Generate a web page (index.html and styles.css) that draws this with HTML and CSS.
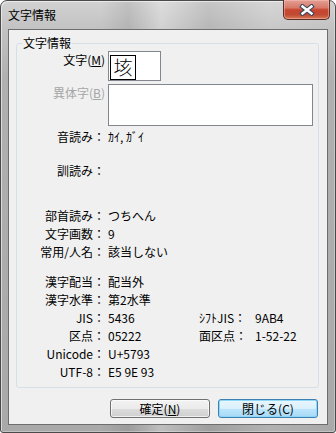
FILE: index.html
```html
<!DOCTYPE html>
<html lang="ja">
<head>
  <meta charset="UTF-8">
  <title>文字情報</title>
  <link rel="stylesheet" href="styles.css">
</head>
<body>
  <div class="window">
    <!-- Title bar -->
    <div class="titlebar">
      <span class="title">文字情報</span>
      <button class="close" aria-label="閉じる">
        <svg width="16" height="12" viewBox="0 0 16 12">
          <path d="M3.5 2.5 L12.5 9.5 M12.5 2.5 L3.5 9.5" stroke="#3b4660" stroke-width="4.6" stroke-linecap="square"/>
          <path d="M3.5 2.5 L12.5 9.5 M12.5 2.5 L3.5 9.5" stroke="#fff" stroke-width="2.4" stroke-linecap="square"/>
        </svg>
      </button>
    </div>

    <!-- Client area -->
    <div class="client">
      <fieldset class="group">
        <legend>文字情報</legend>
        <div class="info">
          <div class="label">文字(<u>M</u>)</div>
          <div class="value wide">
            <div class="charbox"><span class="glyph">垓</span></div>
          </div>

          <div class="label disabled">異体字(<u>B</u>)</div>
          <div class="value wide"><div class="variants"></div></div>

          <div class="label">音読み：</div>
          <div class="value wide">ｶｲ, ｶﾞｲ</div>

          <div class="label">訓読み：</div>
          <div class="value wide"></div>

          <div class="label">部首読み：</div>
          <div class="value wide">つちへん</div>

          <div class="label">文字画数：</div>
          <div class="value wide">9</div>

          <div class="label">常用/人名：</div>
          <div class="value wide">該当しない</div>

          <div class="label">漢字配当：</div>
          <div class="value wide">配当外</div>

          <div class="label">漢字水準：</div>
          <div class="value wide">第2水準</div>

          <div class="label">JIS：</div>
          <div class="value">5436</div>
          <div class="label2">ｼﾌﾄJIS：</div>
          <div class="value">9AB4</div>

          <div class="label">区点：</div>
          <div class="value">05222</div>
          <div class="label2">面区点：</div>
          <div class="value">1-52-22</div>

          <div class="label">Unicode：</div>
          <div class="value wide">U+5793</div>

          <div class="label">UTF-8：</div>
          <div class="value wide">E5 9E 93</div>
        </div>
      </fieldset>

      <div class="buttons">
        <button class="btn">確定(<u>N</u>)</button>
        <button class="btn default">閉じる(C)</button>
      </div>
    </div>
  </div>
</body>
</html>
```

FILE: styles.css
```css
body {
  margin: 0;
  font-family: "Noto Sans CJK JP", "Noto Sans", sans-serif;
  font-size: 12px;
  color: #000;
}

/* Window frame */
.window {
  width: 336px;
  height: 433px;
  box-sizing: border-box;
  border: 1px solid #4a4a4a;
  border-radius: 7px 7px 3px 3px;
  padding: 0 7px 7px;
  display: flex;
  flex-direction: column;
  box-shadow: inset 1px 1px 0 rgba(255, 255, 255, 0.55), inset -1px -1px 0 rgba(255, 255, 255, 0.3);
  background:
    linear-gradient(90deg, rgba(255,255,255,0) 0, rgba(255,255,255,0) 30%, rgba(0,0,0,0.08) 38%, rgba(255,255,255,0.25) 48%, rgba(0,0,0,0.06) 62%, rgba(255,255,255,0.1) 80%, rgba(255,255,255,0) 100%),
    linear-gradient(#d2d2d2 0, #c2c2c2 28px, #b0b0b0 80px, #a9a9a9 100%);
}

.titlebar {
  height: 28px;
  display: flex;
  align-items: flex-start;
}

.title {
  margin-top: 5px;
  line-height: 18px;
}

.close {
  margin: -1px -2px 0 auto;
  width: 47px;
  height: 20px;
  padding: 0;
  border: 1px solid #5b2d27;
  border-top: none;
  border-radius: 0 0 5px 5px;
  display: flex;
  align-items: center;
  justify-content: center;
  box-shadow: inset 0 0 0 1px rgba(255, 200, 190, 0.45);
  background: linear-gradient(#e2a094 0, #d77a6a 40%, #c6452f 52%, #c14a33 78%, #d67a55 100%);
}

/* Client area */
.client {
  flex: 1;
  border: 1px solid #6e6e6e;
  background: #f0f0f0;
  display: flex;
  flex-direction: column;
}

.group {
  margin: 5px 8px 0 7px;
  padding: 0 0 6px;
  border: 1px solid #d5dfe5;
  border-radius: 3px;
  min-width: 0;
}

.group legend {
  margin-left: 5px;
  padding: 0 1px;
  line-height: 16px;
}

.info {
  display: grid;
  grid-template-columns: 88px 94px 53px 1fr;
  grid-template-rows: 33px 44px 34px 45px 18px 18px 30px repeat(6, 18px);
  line-height: 18px;
}

.label {
  grid-column: 1;
  text-align: right;
  white-space: nowrap;
}

.label.disabled {
  color: #a6a6a6;
}

.value {
  padding-left: 3px;
  white-space: nowrap;
}

.value.wide {
  grid-column: 2 / -1;
}

.label2 {
  white-space: nowrap;
}

.charbox {
  width: 53px;
  height: 30px;
  box-sizing: border-box;
  border: 1px solid #82878f;
  background: #fff;
  padding: 3px 0 0 1px;
}

.glyph {
  display: block;
  width: 26px;
  height: 25px;
  box-sizing: border-box;
  border: 1px solid #000;
  font-size: 19px;
  font-weight: 300;
  line-height: 22px;
  text-align: center;
}

.variants {
  width: 205px;
  height: 42px;
  box-sizing: border-box;
  border: 1px solid #82878f;
  background: #fff;
}

/* Dialog buttons */
.buttons {
  margin: 11px 9px 0 0;
  display: flex;
  justify-content: flex-end;
  gap: 8px;
}

.btn {
  width: 100px;
  height: 19px;
  box-sizing: border-box;
  padding: 0;
  font: inherit;
  line-height: 17px;
  color: #000;
  border: 1px solid #707070;
  border-radius: 3px;
  box-shadow: inset 0 0 0 1px rgba(255, 255, 255, 0.7);
  background: linear-gradient(#f2f2f2 0, #ebebeb 50%, #dddddd 51%, #cfcfcf 100%);
}

.btn.default {
  border-color: #3c7fb1;
  box-shadow: inset 0 0 0 1px #8fd8f8;
  background: linear-gradient(#eaf6fd 0, #d9f0fc 50%, #bee6fd 51%, #a7d9f5 100%);
}
```
